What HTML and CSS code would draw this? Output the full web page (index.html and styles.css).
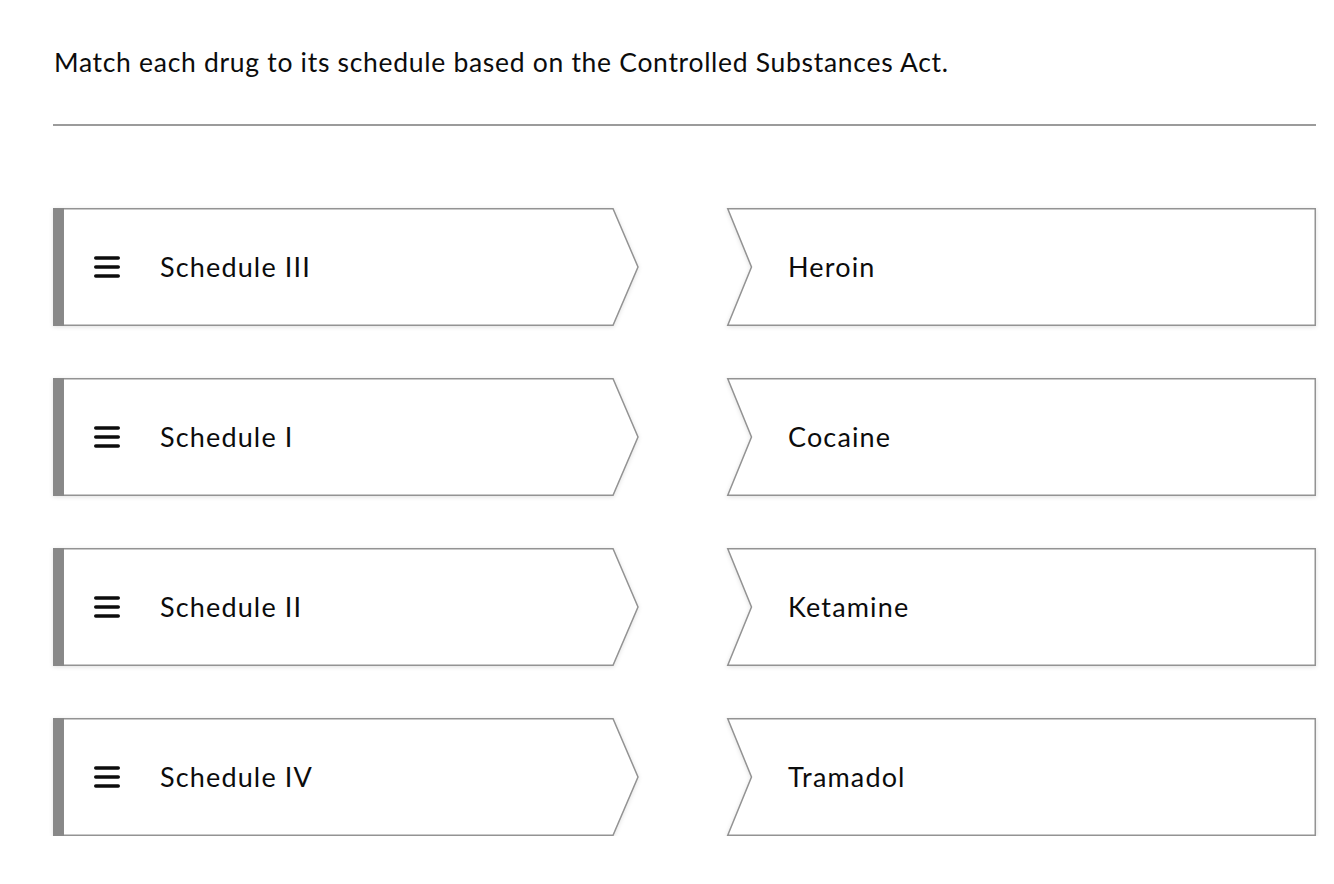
FILE: index.html
```html
<!DOCTYPE html>
<html lang="en">
<head>
<meta charset="utf-8">
<title>Matching</title>
<link rel="stylesheet" href="styles.css">
</head>
<body>
<main class="page">
  <h1 class="prompt">Match each drug to its schedule based on the Controlled Substances Act.</h1>
  <hr class="rule">
  <div class="pairs">
    <div class="card card-left">
      <svg class="shape" viewBox="0 0 587 118" preserveAspectRatio="none"><polygon points="0.75,0.75 561,0.75 586,59 561,117.25 0.75,117.25" /><rect x="0" y="0" width="11" height="118" class="bar"/></svg>
      <svg class="handle" viewBox="0 0 26 22"><path d="M1.75 2h22.5M1.75 11h22.5M1.75 20h22.5"/></svg>
      <span class="label">Schedule III</span>
    </div>
    <div class="card card-right">
      <svg class="shape" viewBox="0 0 589 118" preserveAspectRatio="none"><polygon points="0.75,0.75 588.25,0.75 588.25,117.25 0.75,117.25 24.5,59" /></svg>
      <span class="label">Heroin</span>
    </div>

    <div class="card card-left">
      <svg class="shape" viewBox="0 0 587 118" preserveAspectRatio="none"><polygon points="0.75,0.75 561,0.75 586,59 561,117.25 0.75,117.25" /><rect x="0" y="0" width="11" height="118" class="bar"/></svg>
      <svg class="handle" viewBox="0 0 26 22"><path d="M1.75 2h22.5M1.75 11h22.5M1.75 20h22.5"/></svg>
      <span class="label">Schedule I</span>
    </div>
    <div class="card card-right">
      <svg class="shape" viewBox="0 0 589 118" preserveAspectRatio="none"><polygon points="0.75,0.75 588.25,0.75 588.25,117.25 0.75,117.25 24.5,59" /></svg>
      <span class="label">Cocaine</span>
    </div>

    <div class="card card-left">
      <svg class="shape" viewBox="0 0 587 118" preserveAspectRatio="none"><polygon points="0.75,0.75 561,0.75 586,59 561,117.25 0.75,117.25" /><rect x="0" y="0" width="11" height="118" class="bar"/></svg>
      <svg class="handle" viewBox="0 0 26 22"><path d="M1.75 2h22.5M1.75 11h22.5M1.75 20h22.5"/></svg>
      <span class="label">Schedule II</span>
    </div>
    <div class="card card-right">
      <svg class="shape" viewBox="0 0 589 118" preserveAspectRatio="none"><polygon points="0.75,0.75 588.25,0.75 588.25,117.25 0.75,117.25 24.5,59" /></svg>
      <span class="label">Ketamine</span>
    </div>

    <div class="card card-left">
      <svg class="shape" viewBox="0 0 587 118" preserveAspectRatio="none"><polygon points="0.75,0.75 561,0.75 586,59 561,117.25 0.75,117.25" /><rect x="0" y="0" width="11" height="118" class="bar"/></svg>
      <svg class="handle" viewBox="0 0 26 22"><path d="M1.75 2h22.5M1.75 11h22.5M1.75 20h22.5"/></svg>
      <span class="label">Schedule IV</span>
    </div>
    <div class="card card-right">
      <svg class="shape" viewBox="0 0 589 118" preserveAspectRatio="none"><polygon points="0.75,0.75 588.25,0.75 588.25,117.25 0.75,117.25 24.5,59" /></svg>
      <span class="label">Tramadol</span>
    </div>
  </div>
</main>
</body>
</html>
```
FILE: styles.css
```css
html, body {
  margin: 0;
  padding: 0;
  background: #ffffff;
}

body {
  font-family: Lato, "Open Sans", "Liberation Sans", sans-serif;
  color: #0c0c0c;
}

.page {
  padding: 46px 18px 0 53px;
}

.prompt {
  margin: 0 0 0 1px;
  font-size: 26.5px;
  line-height: 32px;
  letter-spacing: 0.7px;
  font-weight: 400;
  color: #0c0c0c;
}

.rule {
  margin: 46px 0 0 0;
  border: 0;
  height: 2px;
  background: #9b9b9b;
}

.pairs {
  margin-top: 82px;
  display: grid;
  grid-template-columns: 586px 589px;
  column-gap: 88px;
  row-gap: 52px;
}

.card {
  position: relative;
  height: 118px;
  display: flex;
  align-items: center;
}

.shape {
  position: absolute;
  inset: 0;
  width: 100%;
  height: 100%;
  overflow: visible;
  filter: drop-shadow(0 1px 2px rgba(0, 0, 0, 0.12));
}

.shape polygon {
  fill: #ffffff;
  stroke: #939393;
  stroke-width: 1.5px;
  vector-effect: non-scaling-stroke;
}

.shape .bar {
  fill: #888888;
}

.handle {
  position: relative;
  width: 26px;
  height: 22px;
  margin-left: 41px;
  flex: none;
}

.handle path {
  fill: none;
  stroke: #0c0c0c;
  stroke-width: 3.5px;
  stroke-linecap: round;
}

.label {
  position: relative;
  font-size: 27px;
  line-height: 32px;
  letter-spacing: 1.15px;
  padding-bottom: 1px;
  color: #0c0c0c;
}

.card-left .label {
  margin-left: 40px;
}

.card-right .label {
  margin-left: 61px;
}
```
